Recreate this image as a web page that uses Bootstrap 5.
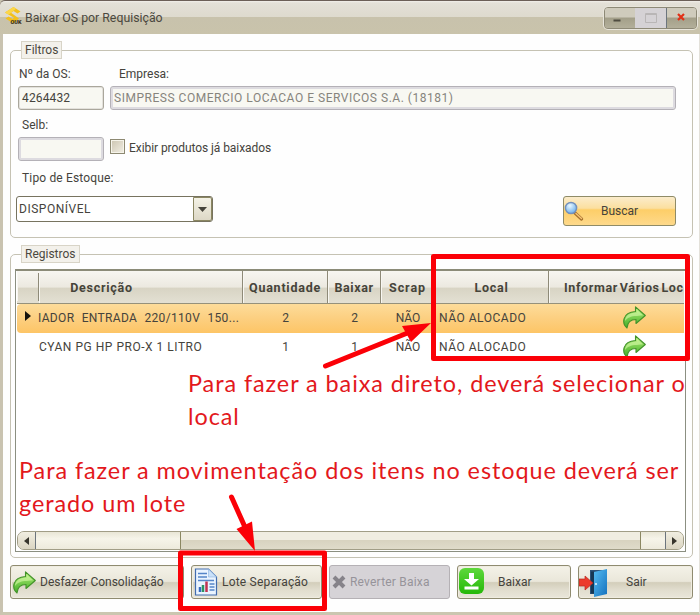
<!DOCTYPE html>
<html lang="pt-BR">
<head>
<meta charset="utf-8">
<meta name="viewport" content="width=device-width, initial-scale=1">
<title>Baixar OS por Requisição</title>
<link href="https://cdn.jsdelivr.net/npm/bootstrap@5.3.0/dist/css/bootstrap.min.css" rel="stylesheet">
<style>
  body { font: 12px/14px Roboto, "Liberation Sans", sans-serif; color: #45433c; background: #fefefe; white-space: nowrap; }
  .win { width: 700px; height: 615px; border-left: 3px solid #c9c3b0; border-right: 1px solid #e3e1da; border-bottom: 3px solid #cbc6b0; background: #fefefe; }
  .titlebar { height: 34px; margin: 0 -1px 0 -3px; padding: 6px 3px 0 4px; border-top: 1px solid #6b5f57; border-radius: 5px 0 0 0;
    background: linear-gradient(#f1efea 0, #e3e0d7 2px, #dedace 16px, #c8c2ac 16px, #c9c3ab 100%); }
  .titlebar .caption { font-size: 12.3px; padding-top: 4px; margin-left: 3px; color: #4b483f; }
  .winbtns { width: 93px; height: 22px; border: 1px solid #8d8976; border-radius: 4px; overflow: hidden; box-shadow: 0 0 0 1px #e8e5db; }
  .winbtn { background: linear-gradient(#cfcbbc 0 45%, #a39f89 50%, #b3af9a); }
  .winbtn.off { background: #d5d2d5; }
  .group { border: 1px solid #c5c2b3; border-radius: 5px; margin: 0 7px; width: 683px; }
  .group-title { height: 18px; margin: -10px 0 0 10px; padding: 1px 3px; border: 1px solid #d8d4c7; background: #f3f1eb; width: max-content; color: #4b483f; }
  .field { height: 24px; border: 1px solid #aaa79c; border-radius: 3px; background: #f8f8f2; padding: 4px 3px; box-shadow: inset 0 0 0 1px #e3e1dc; }
  .field.off { border-color: #b4b1b7; box-shadow: inset 0 0 0 2px #dddbe0; color: #86847d; }
  .chk { width: 15px; height: 15px; border: 1px solid #8d8972; background: linear-gradient(135deg, #cbc4b0, #f2efe4); box-shadow: inset 0 0 0 1px #f6f4ea; }
  .combo { width: 197px; height: 26px; border: 1px solid #77735f; border-radius: 3px; background: #fff; }
  .combo-arrow { width: 19px; border: 1px solid #8b8762; border-radius: 0 2px 2px 0; background: linear-gradient(#f4f2e6, #ddd8c6); }
  .search { width: 113px; height: 30px; border: 1px solid #8f8b67; border-radius: 3px; background: linear-gradient(#fbeccb 0, #fbdf9f 40%, #fdce68 46%, #fed98b 100%); }
  .grid-box { height: 283px; width: 671px; margin: 6px 0 0 4px; border: 1px solid #8b8f81; border-top: 2px solid #8b8b78; padding: 0 1px 1px 1px; background: #fff; overflow: hidden; }
  .cols { display: grid; grid-template-columns: 22px 204px 85px 53px 54px 114px 136px; }
  .head { height: 33px; font-size: 12.5px; letter-spacing: .75px; font-weight: 700; color: #46443a; border-bottom: 1px solid #95917b; background: linear-gradient(#f7f6f1 0, #ece9e0 50%, #d8d4c4 54%, #e3e0d3 100%); }
  .head > div { border-right: 1px solid #8e8a78; box-shadow: inset 1px 0 #f8f7f2; padding-top: 10px; }
  .head > div:first-child { margin: 2px 0; }
  .rec { height: 28.5px; }
  .rec > div { padding-top: 7px; }
  .rec.sel { border-radius: 4px 0 0 4px; background: linear-gradient(#fddc9a, #fccf80 50%, #fdc566); }
  .caps { letter-spacing: .52px; }
  .sbar { height: 19px; border: 1px solid #a19d86; border-radius: 7px; background: linear-gradient(#e9e6d6, #f6f4e9 40%, #edeadc); overflow: hidden; }
  .sbtn { width: 18px; border: 0 solid #8b8762; background: linear-gradient(#f1eee1, #dad5c2); }
  .thumb { width: 461px; border: solid #8b8762; border-width: 0 1px; background: linear-gradient(#f0ede1 0 45%, #d8d3c0 50%, #dfdbca); }
  .cmd { height: 34px; border: 1px solid #8f8b70; border-radius: 3px; background: linear-gradient(#f4f2e8 0, #eae7da 48%, #d3cebb 52%, #e1ddce 75%, #e9e6da 100%); box-shadow: inset 0 0 0 1px #efece0; }
  .cmd.off { background: #d6d3d7; border-color: #b5b1b5; color: #96939a; box-shadow: none; }
  .note { font: 23.4px/33px Lato, sans-serif; letter-spacing: .94px; color: #e3181c; }
  .overlay { left: 0; top: 0; pointer-events: none; }
</style>
</head>
<body>
<svg width="0" height="0" class="position-absolute" aria-hidden="true">
  <defs>
    <linearGradient id="green" x1="0" y1="0" x2="0" y2="1"><stop offset="0" stop-color="#b6ee7a"/><stop offset="1" stop-color="#3fae25"/></linearGradient>
    <linearGradient id="door" x1="0" y1="0" x2="1" y2="1"><stop offset="0" stop-color="#55bdf3"/><stop offset="1" stop-color="#1470bd"/></linearGradient>
    <linearGradient id="dl" x1="0" y1="0" x2="0" y2="1"><stop offset="0" stop-color="#5ed83c"/><stop offset="1" stop-color="#25b808"/></linearGradient>
    <radialGradient id="lens" cx=".4" cy=".3" r=".7"><stop offset="0" stop-color="#eaf8ff"/><stop offset="1" stop-color="#6db0ec"/></radialGradient>
    <symbol id="fwd" viewBox="0 0 24 23"><path d="M13.500 .8 23.300 9.500 14 17.500V13.500C9 13.500 5.500 16 5 22 0 18 -.5 6.500 13.500 5.500Z" fill="url(#green)" stroke="#43932a" stroke-width="1.100" stroke-linejoin="round"/><path d="M14.500 3.200 21 9.200 14.500 10C9 10 5 12 3 15 3 10 7 7 14.500 6.500Z" fill="#d3f7a5" opacity=".65"/></symbol>
  </defs>
</svg>
<main class="win position-relative d-flex flex-column">
  <header class="titlebar d-flex align-items-start">
    <svg width="18" height="18" viewBox="0 0 18 18"><path d="M1 5.500 9.500 0 16.500 4.500 13.500 6.500 9.500 4 7 5.700 15 11.500 9.500 16.500 1.500 11.500 4.500 9.500 8.500 12 10 10.800Z" fill="#f3c01b"/><path d="M1 5.500 9.500 0 12 1.700 4.500 7.800Z" fill="#fbd64a"/><text x="6.500" y="17.300" font-family="Roboto" font-size="5.500" font-weight="900" fill="#38311c" textLength="11">OUK</text></svg>
    <div class="caption">Baixar OS por Requisição</div>
    <div class="winbtns ms-auto d-flex">
      <div class="winbtn" style="width:30px"><svg width="30" height="20"><rect x="8.500" y="11.500" width="7" height="2" fill="#4f4c40"/></svg></div>
      <div class="winbtn off" style="width:31px"><svg width="31" height="20"><path d="M10.500 5.500h11v9h-11zM10 6.500h12" fill="none" stroke="#b9b6b6"/></svg></div>
      <div class="winbtn flex-fill border-start border-secondary"><svg width="28" height="20"><path d="m11 6 6 6m0-6-6 6" stroke="#e13016" stroke-width="2.200"/></svg></div>
    </div>
  </header>

  <section class="group" style="height:188px;margin-top:16px">
    <div class="group-title">Filtros</div>
    <div class="d-flex" style="padding:8px 0 0 8px"><span style="width:100px">Nº da OS:</span><span>Empresa:</span></div>
    <div class="d-flex" style="padding:5px 0 0 7px;gap:6px"><div class="field" style="width:86px;letter-spacing:.15px">4264432</div><div class="field off caps" style="width:566px">SIMPRESS COMERCIO LOCACAO E SERVICOS S.A. (18181)</div></div>
    <div style="padding:8px 0 0 11px">Selb:</div>
    <div class="d-flex" style="padding:5px 0 0 7px"><div class="field off" style="width:86px"></div><div class="chk" style="margin:2px 4px 0 6px"></div><span style="padding-top:4px;letter-spacing:-.07px">Exibir produtos já baixados</span></div>
    <div class="d-flex justify-content-between" style="padding:10px 16px 0 5px">
      <div>
        <div style="padding:0 0 11px 6px;letter-spacing:.15px">Tipo de Estoque:</div>
        <div class="combo d-flex justify-content-between"><span class="caps" style="padding:5px 2px">DISPONÍVEL</span><div class="combo-arrow d-flex align-items-center justify-content-center"><svg width="9" height="5"><path d="M0 0h9L4.500 5Z" fill="#45433a"/></svg></div></div>
      </div>
      <div class="search d-flex align-items-center" style="margin-top:25px"><svg width="20" height="20" viewBox="0 0 20 20"><path d="m10.500 11.500 7 6.500" stroke="#a5702c" stroke-width="3.200" stroke-linecap="round"/><path d="m12 12.500 5.500 5" stroke="#f7c372" stroke-width="1.500" stroke-linecap="round"/><circle cx="7" cy="7" r="5.600" fill="url(#lens)" stroke="#7390bc" stroke-width="1.500"/></svg><span style="margin-left:17px">Buscar</span></div>
    </div>
  </section>

  <section class="group" style="height:304px;margin-top:16px">
    <div class="group-title">Registros</div>
    <div class="grid-box d-flex flex-column">
      <div class="cols head text-center"><div></div><div style="padding-right:78px">Descrição</div><div>Quantidade</div><div style="letter-spacing:.6px">Baixar</div><div style="letter-spacing:.9px">Scrap</div><div>Local</div><div class="text-start border-end-0" style="padding-left:15px;letter-spacing:.65px;word-spacing:-2px">Informar Vários Loc</div></div>
      <div class="cols rec sel text-center">
        <div class="text-end" style="padding-right:8px"><svg width="6" height="10" class="d-block ms-auto"><path d="M0 0 6 5 0 10Z" fill="#16130c"/></svg></div>
        <div class="text-start" style="word-spacing:4px;letter-spacing:.33px;margin-left:-1px">IADOR ENTRADA 220/110V 150...</div><div>2</div><div>2</div><div>NÃO</div><div class="text-start caps" style="padding-left:4px">NÃO ALOCADO</div><div style="padding:2px 0 0 34px"><svg width="24" height="23"><use href="#fwd"/></svg></div>
      </div>
      <div class="cols rec text-center">
        <div></div><div class="text-start caps">CYAN PG HP PRO-X 1 LITRO</div><div>1</div><div>1</div><div>NÃO</div><div class="text-start caps" style="padding-left:4px">NÃO ALOCADO</div><div style="padding:2px 0 0 34px"><svg width="24" height="23"><use href="#fwd"/></svg></div>
      </div>
      <div class="note" style="margin:6px 0 0 171px">Para fazer a baixa direto, deverá selecionar o<br>local</div>
      <div class="note" style="margin:21px 0 0 2px">Para fazer a movimentação dos itens no estoque deverá ser<br>gerado um lote</div>
      <div class="sbar d-flex mt-auto">
        <div class="sbtn border-end border-secondary d-flex align-items-center justify-content-center"><svg width="5" height="8"><path d="M5 0v8L0 4Z" fill="#37352d"/></svg></div>
        <div class="thumb" style="margin-left:144px"></div>
        <div class="sbtn border-start border-secondary d-flex align-items-center justify-content-center ms-auto"><svg width="5" height="8"><path d="M0 0v8l5-4Z" fill="#37352d"/></svg></div>
      </div>
    </div>
  </section>

  <footer class="d-flex" style="padding:7px 0 0 7px">
    <div class="cmd d-flex align-items-center" style="width:174px"><svg width="24" height="23" style="margin-left:1px"><use href="#fwd"/></svg><span style="margin-left:4px">Desfazer Consolidação</span></div>
    <div class="cmd d-flex align-items-center" style="width:131px;margin-left:7px"><svg width="24" height="28" viewBox="0 0 24 28" style="margin-left:2px"><path d="M1.500 1h13l8 8v18h-21z" fill="#eaf4ff" stroke="#426cae" stroke-width="1.200"/><path d="M14.500 1v8h8z" fill="#c9e1fa" stroke="#8fb4df" stroke-width=".6"/><path d="M4 5.500h9M4 9h9M4 12.500h16M15.500 16h5M15.500 19h5M15.500 22h5" stroke="#5585c8" stroke-width="1.300"/><path d="M6 19v5" stroke="#3469bd" stroke-width="2.500"/><path d="M9 17v7" stroke="#2d9463" stroke-width="2.500"/><path d="M12.500 13.500V24" stroke="#c13250" stroke-width="2.500"/></svg><span style="margin-left:4px;letter-spacing:.2px">Lote Separação</span></div>
    <div class="cmd off d-flex align-items-center" style="width:121px;margin-left:7px"><svg width="14" height="14" style="margin-left:2px"><path d="m2 2 10 10m0-10L2 12" stroke="#86838a" stroke-width="4"/></svg><span style="margin-left:4px;letter-spacing:.2px">Reverter Baixa</span></div>
    <div class="cmd d-flex align-items-center" style="width:114px;margin-left:7px"><svg width="25" height="26" viewBox="0 0 25 26" style="margin-left:1px;margin-top:-2px"><rect width="25" height="26" rx="6" fill="url(#dl)"/><path d="M10 5h5v6h5l-7.500 6.500L5 11h5zM5.500 18.500h14v3h-14z" fill="#fff"/></svg><span style="margin-left:14px">Baixar</span></div>
    <div class="cmd d-flex align-items-center" style="width:115px;margin-left:7px"><svg width="29" height="29" viewBox="0 0 29 29"><path d="M11 2h17v24H11z" fill="#2c5278"/><path d="M15 4 28 1v25l-13 3z" fill="url(#door)"/><path d="M12 3.500h3v22h-3z" fill="#163855"/><path d="M0 11h6V8l8 7-8 7v-4H0z" fill="#ec3b2b" stroke="#b8291f" stroke-width=".7"/><circle cx="17" cy="16" r="1.100" fill="#dceffc"/></svg><span style="margin-left:18px">Sair</span></div>
  </footer>

  <svg class="overlay position-absolute" width="696" height="615" viewBox="3 0 696 615">
    <g fill="none" stroke="#fb0007" stroke-width="5" stroke-linejoin="round"><rect x="433.500" y="256.500" width="254" height="102"/><rect x="180.500" y="553" width="144" height="55.500"/></g>
    <g stroke="#fb0007" stroke-width="5" stroke-linecap="round"><path d="m325.500 366 82-33"/><path d="m231.500 497 13 29"/></g>
    <path d="m431 323-29 3 9 16zM255 551l-18.500-22 15.500-7.500z" fill="#fb0007"/>
  </svg>
</main>
<script src="https://cdn.jsdelivr.net/npm/bootstrap@5.3.0/dist/js/bootstrap.bundle.min.js"></script>
</body>
</html>
